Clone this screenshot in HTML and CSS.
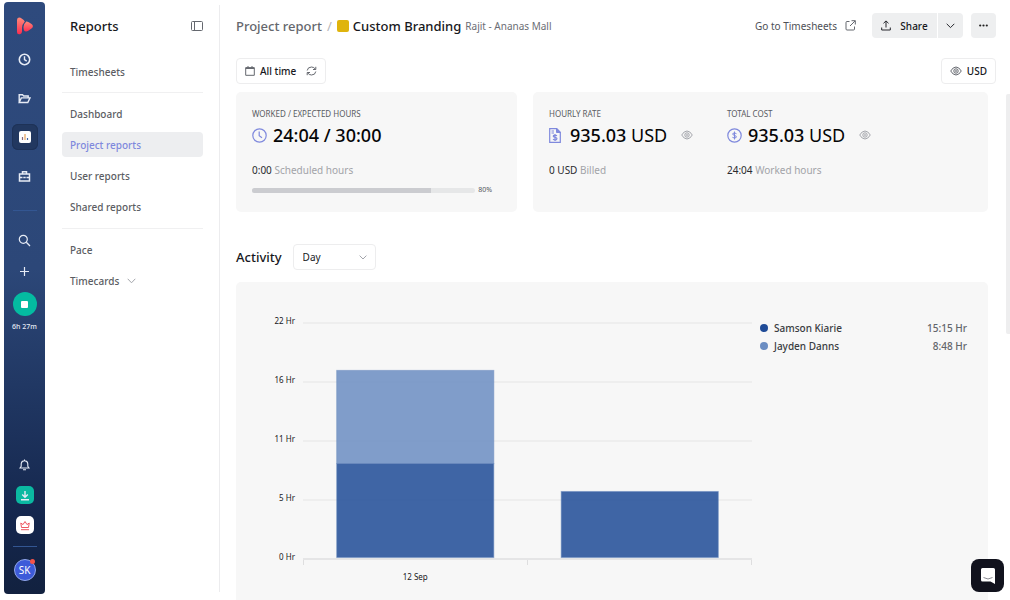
FILE: index.html
```html
<!DOCTYPE html>
<html lang="en">
<head>
<meta charset="utf-8">
<meta name="viewport" content="width=device-width, initial-scale=1">
<title>Project report</title>
<link rel="stylesheet" href="styles.css">
</head>
<body>
<div class="app">
  <nav class="rail" aria-label="Main">
    <a class="logo" href="#" aria-label="Home">
      <svg width="16" height="18" viewBox="0 0 16 18"><defs><linearGradient id="lg" x1="0" y1="0" x2="0" y2="1"><stop offset="0" stop-color="#ff8a7a"/><stop offset="1" stop-color="#fb2d50"/></linearGradient></defs><path d="M2 .5Q0 .5 0 3V15Q0 18 3 17.200Q5 16.800 5 14.500V11Q5 7.500 7.800 4.500Q7 3 5 1.800Q3.500 .5 2 .5Z" fill="url(#lg)"/><path d="M9.300 4.500Q6.300 7 6.500 10.500Q6.600 14.800 9.300 14.500Q11 14.300 14.500 11.500Q17.300 9 14.500 7Q11 4 9.300 4.500Z" fill="url(#lg)"/></svg>
    </a>
    <a class="rail-link" href="#" aria-label="Time"><svg class="ico" width="13" height="13" viewBox="0 0 13 13"><circle cx="6.500" cy="6.500" r="5.200" stroke-width="1.600"/><path d="M6.500 3.200V6.700L8.700 8.200" stroke-width="1.400"/></svg></a>
    <a class="rail-link" href="#" aria-label="Projects"><svg class="ico" width="13" height="11" viewBox="0 0 13 11"><path d="M1.200 9.500V1.700H4.500L5.700 3H10.200V4.700M1.200 9.500L3.300 4.900H12L9.800 9.500Z" stroke-width="1.400"/></svg></a>
    <a class="rail-link is-active" href="#" aria-label="Reports"><svg width="12" height="12" viewBox="0 0 12 12"><rect width="12" height="12" rx="2" fill="#fff"/><path d="M3.500 9V6" stroke="#8a6a7a" stroke-width="1.200"/><path d="M6 9V3" stroke="#e8a35a" stroke-width="1.200"/><path d="M8.500 9V7" stroke="#3f66a5" stroke-width="1.200"/></svg></a>
    <a class="rail-link" href="#" aria-label="Clients"><svg class="ico" width="13" height="13" viewBox="0 0 13 13"><path d="M1.500 4H11.500V11H1.500ZM4.500 4V1.800H8.500V4M1.500 7.500H4.500M8.500 7.500H11.500M5.300 7.500H7.700" stroke-width="1.500"/></svg></a>
    <hr class="rail-rule">
    <button class="rail-tool" aria-label="Search"><svg class="ico" width="13" height="13" viewBox="0 0 13 13"><circle cx="5.300" cy="5.300" r="4" stroke-width="1.200"/><path d="M8.300 8.300L12 12" stroke-width="1.300"/></svg></button>
    <button class="rail-tool" aria-label="Add"><svg class="ico" width="11" height="11" viewBox="0 0 11 11"><path d="M5.500 1V10M1 5.500H10" stroke-width="1.200"/></svg></button>
    <button class="stop" aria-label="Stop timer"><span class="stop-mark"></span></button>
    <span class="timer">6h 27m</span>
    <div class="rail-foot">
      <button class="bell" aria-label="Notifications"><svg class="ico" width="11" height="12" viewBox="0 0 11 12"><path d="M1 9H10L8.800 7.300V4.800Q8.500 1.800 5.500 1.800Q2.500 1.800 2.200 4.800V7.300ZM5.500 1.800V0.500M4 10.800H7" stroke-width="1.100"/></svg></button>
      <button class="tile tile-green" aria-label="Download"><svg class="ico" width="10" height="11" viewBox="0 0 10 11"><path d="M5 1V7M2.200 4.600L5 7.200L7.800 4.600M1 9.800H9" stroke-width="1.400"/></svg></button>
      <button class="tile tile-white" aria-label="Upgrade"><svg class="ico ico-red" width="10" height="11" viewBox="0 0 10 11"><path d="M1.500 7.500L0.800 3L3 4.600L5 1.500L7 4.600L9.200 3L8.500 7.500ZM1 9.700H9" stroke-width="1"/></svg></button>
      <hr class="rail-rule">
      <button class="avatar" aria-label="Account">SK<span class="avatar-dot"></span></button>
    </div>
  </nav>

  <aside class="side">
    <div class="side-head">
      <h1 class="side-title">Reports</h1>
      <button class="plain" aria-label="Collapse panel"><svg class="ico ico-gray" width="12" height="10" viewBox="0 0 12 10"><rect x=".5" y=".5" width="11" height="9" rx="1"/><path d="M3.500 .5V9.500"/></svg></button>
    </div>
    <ul class="menu"><li><a class="menu-link" href="#">Timesheets</a></li></ul>
    <ul class="menu">
      <li><a class="menu-link" href="#">Dashboard</a></li>
      <li><a class="menu-link is-current" href="#" aria-current="page">Project reports</a></li>
      <li><a class="menu-link" href="#">User reports</a></li>
      <li><a class="menu-link" href="#">Shared reports</a></li>
    </ul>
    <ul class="menu">
      <li><a class="menu-link" href="#">Pace</a></li>
      <li><a class="menu-link" href="#">Timecards <svg class="ico ico-light" width="9" height="6" viewBox="0 0 9 6"><path d="M.7 .8L4.500 4.800L8.300 .8"/></svg></a></li>
    </ul>
  </aside>

  <main class="main">
    <header class="topbar">
      <a class="crumb" href="#">Project report</a>
      <span class="slash">/</span>
      <span class="swatch"></span>
      <h2 class="project">Custom Branding</h2>
      <span class="client">Rajit - Ananas Mall</span>
      <a class="goto" href="#">Go to Timesheets <svg class="ico ico-gray" width="11" height="11" viewBox="0 0 11 11"><path d="M4.500 1.500H2Q1 1.500 1 2.500V9Q1 10 2 10H8.500Q9.500 10 9.500 9V6.500M6.500 .7H10.300V4.500M10.200 .8L5 6"/></svg></a>
      <div class="split">
        <button class="btn btn-share"><svg class="ico ico-dark" width="10" height="11" viewBox="0 0 10 11"><path d="M5 7.500V1M2.500 3.300L5 .9L7.500 3.300M.7 7.500V10H9.300V7.500"/></svg>Share</button>
        <button class="btn btn-drop" aria-label="Share options"><svg class="ico ico-dark" width="9" height="6" viewBox="0 0 9 6"><path d="M.7 .8L4.500 4.600L8.300 .8"/></svg></button>
      </div>
      <button class="btn btn-more" aria-label="More"><svg width="9" height="3" viewBox="0 0 9 3" fill="#222"><circle cx="1.200" cy="1.500" r="1.100"/><circle cx="4.500" cy="1.500" r="1.100"/><circle cx="7.800" cy="1.500" r="1.100"/></svg></button>
    </header>

    <div class="filters">
      <button class="chip"><svg class="ico ico-gray" width="10" height="10" viewBox="0 0 10 10"><path d="M.7 1.700H9.300V9.300H.7ZM3 0V2M7 0V2"/><path d="M.7 2.200H9.300" stroke-width="1.600"/></svg><span>All time</span><svg class="ico ico-gray chip-sync" width="11" height="10" viewBox="0 0 11 10"><path d="M1.200 4.500Q1.700 1 5.500 1Q8 1 9.500 3.300M9.800 .8V3.500H7M9.800 5.500Q9.300 9 5.500 9Q3 9 1.500 6.700M1.200 9.200V6.500H4"/></svg></button>
      <button class="chip"><svg class="ico ico-gray" width="12" height="10" viewBox="0 0 12 10"><path d="M.7 5Q3 1 6 1Q9 1 11.300 5Q9 9 6 9Q3 9 .7 5Z"/><circle cx="6" cy="5" r="2.200"/><circle cx="6" cy="5" r=".5"/></svg><span>USD</span></button>
    </div>

    <div class="content">
      <section class="cards">
        <article class="card card-hours">
          <h3 class="label">WORKED / EXPECTED HOURS</h3>
          <p class="figure"><svg class="ico ico-violet" width="15" height="15" viewBox="0 0 15 15"><circle cx="7.500" cy="7.500" r="6.700" stroke-width="1.200"/><path d="M7.200 3.500V7.700L10 9.700" stroke-width="1.200"/></svg><strong>24:04 / 30:00</strong></p>
          <p class="note"><b>0:00</b> Scheduled hours</p>
          <div class="meter"><div class="meter-track"><div class="meter-fill" style="width:80%"></div></div><span class="meter-text">80%</span></div>
        </article>
        <article class="card card-money">
          <div class="stat">
            <h3 class="label">HOURLY RATE</h3>
            <p class="figure"><svg class="ico ico-violet figure-doc" width="12" height="15" viewBox="0 0 12 15"><path d="M.7 .7H7.800L11.300 4.200V14.300H.7Z" stroke-width="1.200"/><path d="M7.500 .7V4.500H11.300Z" fill="#7f89dd"/><path d="M2.500 3H5M2.500 5H5"/><path d="M8 7.700Q6 6.500 4.500 7.500Q3.700 9 6 9.400Q8.700 10 7.600 11.500Q6 12.500 4 11.300M6 6V13" stroke-width="1.200"/></svg><span><strong>935.03</strong> USD</span><button class="plain figure-eye" aria-label="Toggle hourly rate"><svg class="ico ico-light" width="12" height="10" viewBox="0 0 12 10"><path d="M.7 5Q3 1 6 1Q9 1 11.300 5Q9 9 6 9Q3 9 .7 5Z"/><circle cx="6" cy="5" r="2.200"/><circle cx="6" cy="5" r=".5"/></svg></button></p>
            <p class="note"><b>0 USD</b> Billed</p>
          </div>
          <div class="stat">
            <h3 class="label">TOTAL COST</h3>
            <p class="figure"><svg class="ico ico-violet" width="15" height="15" viewBox="0 0 15 15"><circle cx="7.500" cy="7.500" r="6.700" stroke-width="1.200"/><path d="M9.500 5.700Q7.500 4.300 5.900 5.400Q5 6.900 7.500 7.400Q10.200 8 9.100 9.600Q7.500 10.700 5.400 9.300M7.500 3.500V11.500"/></svg><span><strong>935.03</strong> USD</span><button class="plain figure-eye" aria-label="Toggle total cost"><svg class="ico ico-light" width="12" height="10" viewBox="0 0 12 10"><path d="M.7 5Q3 1 6 1Q9 1 11.300 5Q9 9 6 9Q3 9 .7 5Z"/><circle cx="6" cy="5" r="2.200"/><circle cx="6" cy="5" r=".5"/></svg></button></p>
            <p class="note"><b>24:04</b> Worked hours</p>
          </div>
        </article>
      </section>

      <div class="activity">
        <label class="activity-title" for="period">Activity</label>
        <div class="picker">
          <select id="period" class="picker-select"><option>Day</option><option>Week</option><option>Month</option></select>
          <svg class="ico ico-light picker-arrow" width="8" height="5" viewBox="0 0 8 5"><path d="M.6 .6L4 4L7.400 .6"/></svg>
        </div>
      </div>

      <section class="chart">
        <div class="axis-y"><span>22 Hr</span><span>16 Hr</span><span>11 Hr</span><span>5 Hr</span><span>0 Hr</span></div>
        <div class="plot">
          <svg class="plot-svg" role="img" aria-label="Hours per day">
            <g fill="#eeeeee"><rect width="100%" height="2" y="0"/><rect width="100%" height="2" y="25%"/><rect width="100%" height="2" y="50%"/><rect width="100%" height="2" y="75%"/></g>
            <g fill="#1f4b97" stroke="#6b8bc0" stroke-opacity=".5">
              <rect x="7.500%" y="20.500%" width="35%" height="39.500%" fill="#6b8dc2" fill-opacity=".85"/>
              <rect x="7.500%" y="60%" width="35%" height="39.800%" fill-opacity=".85"/>
              <rect x="57.500%" y="71.800%" width="35%" height="28%" fill-opacity=".85"/>
            </g>
          </svg>
          <div class="ticks"><span class="tick">12 Sep</span><span class="tick"></span></div>
        </div>
        <ul class="legend">
          <li class="legend-row"><span class="dot dot-dark"></span>Samson Kiarie<span class="legend-value">15:15 Hr</span></li>
          <li class="legend-row"><span class="dot dot-soft"></span>Jayden Danns<span class="legend-value">8:48 Hr</span></li>
        </ul>
      </section>
    </div>
  </main>
  <div class="scrollbar"></div>
  <button class="chat" aria-label="Open chat"><svg width="14" height="16" viewBox="0 0 14 16"><path d="M1.500 0H12.500Q14 0 14 1.500V16L9.500 13.500H1.500Q0 13.500 0 12V1.500Q0 0 1.500 0Z" fill="#fff"/><path d="M2.500 9.500Q7 12.500 11.500 9.500" fill="none" stroke="#8b8b93"/></svg></button>
</div>
</body>
</html>
```

FILE: styles.css
```css
* { box-sizing: border-box; }
body, h1, h2, h3, p, ul { margin: 0; padding: 0; }
body { font-family: "Noto Sans", "Open Sans", sans-serif; font-size: 10px; line-height: 16px; color: #17181c; background: #fff; }
ul { list-style: none; }
a { color: inherit; text-decoration: none; }
button, select { font: inherit; color: inherit; border: 0; background: none; padding: 0; }
svg { display: block; flex: none; }
.ico { fill: none; stroke: #e6ebf5; }
.ico-gray { stroke: #65686f; }
.ico-dark { stroke: #26272d; }
.ico-light { stroke: #a3a5ab; }
.ico-red { stroke: #ef5661; }
.ico-violet { stroke: #7f89dd; }
.plain { display: flex; }

.app { display: flex; height: 100vh; overflow: hidden; position: relative; }

.rail { flex: none; width: 41px; margin: 2px 1px 6px 4px; border-radius: 4px; background: linear-gradient(#2e4a7d 0%, #2c4778 45%, #14264c 88%, #12213f 100%); display: flex; flex-direction: column; align-items: center; padding-top: 12px; }
.logo { height: 24px; display: grid; place-items: center; }
.rail-link { width: 26px; height: 26px; margin-bottom: 13px; display: grid; place-items: center; border-radius: 6px; }
.logo + .rail-link { margin-top: 8px; }
.is-active { background: #223860; box-shadow: inset 0 0 0 1px #1e3257; }
.rail-rule { width: 24px; height: 1px; border: 0; margin: 8px 0 14px; background: #335692; }
.rail-tool { width: 26px; height: 31px; display: grid; place-items: center; }
.stop { width: 24px; height: 24px; margin-top: 5px; border-radius: 50%; background: #04bba1; display: grid; place-items: center; }
.stop-mark { width: 7px; height: 7px; border-radius: 1px; background: #fff; }
.timer { margin-top: 6px; font-size: 7px; line-height: 10px; font-weight: 500; color: #e5eaf4; white-space: nowrap; }
.rail-foot { margin-top: auto; display: flex; flex-direction: column; align-items: center; padding-bottom: 13px; }
.bell { height: 18px; margin-bottom: 12px; display: grid; place-items: center; }
.tile { width: 18px; height: 18px; margin-bottom: 12px; border-radius: 5px; display: grid; place-items: center; }
.tile-green { background: #0bb9a1; }
.tile-white { background: #fff; }
.rail-foot .rail-rule { margin: 0 0 12px; }
.avatar { position: relative; width: 22px; height: 22px; border-radius: 50%; border: 1px solid #91a6ea; background: #3d5bd9; color: #fff; line-height: 20px; }
.avatar-dot { position: absolute; top: -1px; right: 0; width: 5px; height: 5px; border-radius: 50%; background: #f4544b; }

.side { flex: none; width: 174px; margin: 5px 0 8px; padding: 0 16px; border-right: 1px solid #ececee; }
.side-head { display: flex; justify-content: space-between; align-items: center; height: 42px; padding: 0 0 0 8px; margin-bottom: 6px; }
.side-title { font-size: 13px; font-weight: 500; color: #17181c; }
.menu { display: flex; flex-direction: column; gap: 6px; padding: 8px 0 9px; }
.menu:nth-of-type(1) { padding: 6px 0 8px; }
.menu + .menu { border-top: 1px solid #f0f0f1; }
.menu-link { display: flex; align-items: center; gap: 8px; height: 25px; padding: 0 8px; border-radius: 4px; font-weight: 500; color: #5b5d63; }
.is-current { background: #edeef0; color: #7f89dd; }

.main { flex: 1; min-width: 0; padding: 13px 14px 0 16px; display: flex; flex-direction: column; }
.topbar { display: flex; align-items: center; height: 25px; white-space: nowrap; }
.crumb { font-size: 13px; font-weight: 500; color: #65676d; }
.slash { margin: 0 5px; font-size: 13px; color: #b6b7bb; }
.swatch { width: 12px; height: 12px; border-radius: 2px; background: #dfb40d; }
.project { margin: 0 4px; font-size: 13px; font-weight: 500; }
.client { color: #6b6d74; }
.goto { display: flex; align-items: center; gap: 8px; margin-left: auto; color: #4e5056; }
.split { display: flex; gap: 1px; margin: 0 8px 0 16px; }
.btn { height: 25px; background: #eeeff0; border-radius: 4px; display: flex; align-items: center; justify-content: center; gap: 9px; font-weight: 500; }
.btn-share { width: 65px; border-radius: 4px 0 0 4px; }
.btn-drop { width: 25px; border-radius: 0 4px 4px 0; }
.btn-more { width: 25px; }
.filters { display: flex; justify-content: space-between; margin-top: 20px; }
.chip { height: 26px; padding: 0 8px; border: 1px solid #ededee; border-radius: 4px; display: flex; align-items: center; gap: 5px; font-weight: 500; }
.chip-sync { margin-left: 5px; }

.content { margin: 8px 8px 0 0; flex: 1; min-height: 0; display: flex; flex-direction: column; }
.cards { display: grid; grid-template-columns: 281fr 455fr; gap: 16px; }
.card { height: 120px; border-radius: 5px; background: #f7f7f7; padding: 16px; }
.card-money { display: flex; }
.stat { width: 178px; }
.label { font-size: 8px; line-height: 12px; font-weight: 400; color: #5a5c62; }
.figure { display: flex; align-items: center; gap: 6px; height: 30px; font-size: 18px; line-height: 24px; white-space: nowrap; color: #050506; }
.figure strong { font-weight: 500; }
.figure-doc { margin-right: 3px; }
.figure-eye { margin-left: 8px; }
.note { margin-top: 12px; color: #a2a3a8; }
.note b { font-weight: 400; color: #2a2b30; }
.meter { display: flex; align-items: center; gap: 3px; margin: 7px 9px 0 0; height: 10px; }
.meter-track { flex: 1; height: 5px; border-radius: 3px; background: #e6e7e8; overflow: hidden; }
.meter-fill { height: 100%; background: #cbccd0; }
.meter-text { font-size: 7px; line-height: 10px; color: #55575d; }

.activity { display: flex; align-items: center; gap: 11px; margin: 32px 0 12px; }
.activity-title { font-size: 13px; font-weight: 500; }
.picker { display: grid; width: 83px; align-items: center; }
.picker-select { grid-area: 1 / 1; height: 26px; padding: 0 9px; appearance: none; border: 1px solid #ededee; border-radius: 4px; }
.picker-arrow { grid-area: 1 / 1; justify-self: end; margin-right: 9px; pointer-events: none; }

.chart { flex: 1; display: flex; align-items: flex-start; border-radius: 5px 5px 0 0; background: #f7f7f7; padding: 40px 21px 0 8px; }
.axis-y { width: 51px; height: 248px; margin-top: -7px; display: flex; flex-direction: column; justify-content: space-between; text-align: right; font-size: 8px; line-height: 12px; }
.plot { flex: 1; margin-left: 8px; }
.plot-svg { width: 100%; height: 236px; overflow: visible; }
.ticks { display: grid; grid-template-columns: 1fr 1fr; border-top: 2px solid #e5e5e6; background: linear-gradient(#dededf, #dededf) 0 0 / 1px 5px no-repeat, linear-gradient(#dededf, #dededf) 50% 0 / 1px 5px no-repeat, linear-gradient(#dededf, #dededf) 100% 0 / 1px 5px no-repeat; padding-top: 11px; }
.tick { text-align: center; font-size: 8px; line-height: 12px; }
.legend { width: 207px; margin: -2px 0 0 8px; display: flex; flex-direction: column; gap: 2px; }
.legend-row { display: flex; align-items: center; gap: 6px; font-weight: 500; color: #393b41; }
.legend-value { margin-left: auto; color: #63656b; }
.dot { width: 8px; height: 8px; border-radius: 50%; }
.dot-dark { background: #1f4b97; }
.dot-soft { background: #6b8dc2; }

.scrollbar { position: absolute; right: 0; top: 94px; width: 4px; height: 240px; border-radius: 2px 0 0 2px; background: #eeeeef; }
.chat { position: absolute; right: 6px; bottom: 8px; width: 33px; height: 33px; border-radius: 8px; background: #11121d; display: grid; place-items: center; }
```
